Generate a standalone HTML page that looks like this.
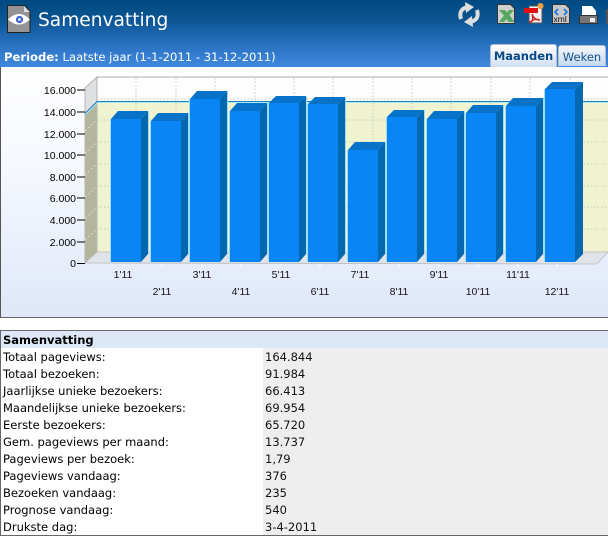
<!DOCTYPE html>
<html><head><meta charset="utf-8">
<style>
html,body{margin:0;padding:0;width:608px;height:536px;overflow:hidden;background:#fff}
body{font-family:"DejaVu Sans","Liberation Sans",sans-serif;font-size:11.5px;color:#000;position:relative}
#head{position:absolute;left:0;top:0;width:608px;height:67px;background:linear-gradient(#004a80 0,#0b5594 30%,#2b74c4 70%,#3f88de 100%)}
#title{position:absolute;left:38px;top:9px;font-size:18.6px;line-height:24px;color:#fff}
#per{position:absolute;left:4px;top:50px;font-size:11.6px;line-height:14px;color:#fff;white-space:nowrap}
.tab{position:absolute;top:44px;height:23px;box-sizing:border-box;border:1px solid #b0bccc;border-bottom:0;border-radius:3px 3px 0 0;text-align:center;line-height:23px;font-size:11.5px;color:#15548f}
#t1{left:490px;width:67px;font-weight:bold;color:#0a4a84;background:linear-gradient(#fff,#d0def2)}
#t2{left:558px;width:48px;height:22px;top:45px;background:linear-gradient(#f4f7fb,#c4d8ef);line-height:22px;border-bottom:1px solid #3f88de}
#ch{position:absolute;left:0;top:67px;width:608px;height:251px;box-sizing:border-box;border-left:1px solid #555;border-bottom:1px solid #666;background:linear-gradient(#fff 0,#f5f8fe 40%,#dfe7f8 100%)}
#tb{position:absolute;left:0;top:330px;width:608px;height:206px;box-sizing:border-box;border:1px solid #666;border-right:0;background:#fff}
.hd{height:17px;background:#dce8f8;font-weight:bold;line-height:19px;padding-left:2px;font-size:11.5px}
.r{height:17px;line-height:19px;white-space:nowrap;position:relative;padding-left:2px}
.r b{font-weight:normal;position:absolute;left:262px;right:0;top:0;height:17px;background:#eee;padding-left:2px;color:#111}
svg{position:absolute;left:0;top:0}
</style></head><body>
<div id="head"></div>
<div id="ch"></div>
<svg width="608" height="318" viewBox="0 0 608 318">
<!-- icons -->
<path d="M7.500 5.500h17l5.500 6v21H7.500z" fill="#949494" stroke="#222" stroke-width="1"/>
<path d="M24 6v6h6z" fill="#ddd"/>
<path d="M8 19.500q11-11 22 0q-11 10-22 0z" fill="#fff"/>
<circle cx="19.500" cy="19.500" r="3.600" fill="#3a62c8"/><circle cx="19.500" cy="19.500" r="1.500" fill="#dfe6ff"/>
<g fill="none" stroke="#dedede" stroke-width="4">
<path d="M461 19q-3-10 7-12"/><path d="M477 10q3 10-7 12"/></g>
<path d="M465 2l9 5-8 6zM473 27l-9-5 8-6z" fill="#dedede"/>
<path d="M497.500 4.500h13l4 4v15h-17z" fill="#d0d0cc" stroke="#333"/>
<path d="M499 10h6l2 2.500 2-2.500h5l-4.500 5 5 7h-6l-2-3-2.500 3h-5l5-6.500z" fill="#55a860"/>
<path d="M529 6h13v17h-13z" fill="#f3f3f3" stroke="#555"/>
<path d="M524 8h14v5h-14z" fill="#e01010"/>
<path d="M532 14q2 8 -2 8q5-4 10-2q-6 0-8-6z" fill="none" stroke="#d02020" stroke-width="1.400"/>
<circle cx="540.500" cy="6" r="3" fill="#f0a040"/>
<path d="M552.500 4.500h13l4 4v15h-17z" fill="#c8c8c8" stroke="#333"/>
<path d="M558 9l-3 3 3 3M564 9l3 3-3 3" fill="none" stroke="#1670f0" stroke-width="1.600"/>
<text x="553.500" y="22" font-family="Liberation Sans" font-size="8.500" fill="#111">xml</text>
<path d="M582 6h10l4 5v5h-14z" fill="#fff"/>
<path d="M579.500 15.500h18v8h-18z" fill="#777" stroke="#333"/>
<rect x="590" y="18" width="5" height="4" fill="#eee"/>
<rect x="606" y="9" width="2" height="15" fill="#555"/>

<!-- walls -->
<rect x="97" y="77" width="511" height="24" fill="#fdfdfe"/>
<rect x="97" y="101" width="511" height="151" fill="#eff3cf"/>
<path d="M97 77H608" stroke="#c8c8c8" stroke-width="1.500"/>
<polygon points="85,88 97,77 97,101 85,113" fill="#dfe0e2"/>
<polygon points="85,113 97,101 97,252 85,263" fill="#b3b69c"/>
<path d="M85 88V263M85 88L97 77V252" stroke="#b5b5b5" fill="none"/>
<polygon points="85,263 97,252 608,252 597,264" fill="#e0e3e8" stroke="#b8bcc0" stroke-width="0.800"/>
<g stroke="#c8c8c8" stroke-dasharray="1.500 2" fill="none">
<path d="M97 99H608M97 120H608M97 142H608M97 164H608M97 186H608M97 207H608M97 229H608"/>
<path d="M136 78V252M176 78V252M215 78V252M255 78V252M294 78V252M333 78V252M373 78V252M412 78V252M451 78V252M491 78V252M530 78V252M570 78V252"/>
</g>
<g stroke="#dcdcc8" stroke-dasharray="2 2" fill="none">
<path d="M85 131L97 120M85 153L97 142M85 175L97 164M85 197L97 186M85 218L97 207M85 240L97 229"/>
</g>
<path d="M85 113.500L97 101.500H608" stroke="#1d80c0" fill="none"/>
<path d="M86 114L98 102.500H608" stroke="#a8ecf4" fill="none"/>

<!-- bars -->
<g stroke="none">
<rect x="110" y="119" width="1" height="143" fill="#a0dcf0"/><rect x="148" y="111" width="1" height="143" fill="#a0dcf0"/>
<rect x="111" y="119" width="30" height="143" fill="#0a85f5"/><polygon points="141,119 148,111 148,254 141,262" fill="#0468b0"/><polygon points="111,119 118,111 148,111 141,119" fill="#0672c8"/>
<rect x="150" y="121" width="1" height="141" fill="#a0dcf0"/><rect x="188" y="113" width="1" height="141" fill="#a0dcf0"/>
<rect x="151" y="121" width="30" height="141" fill="#0a85f5"/><polygon points="181,121 188,113 188,254 181,262" fill="#0468b0"/><polygon points="151,121 158,113 188,113 181,121" fill="#0672c8"/>
<rect x="189" y="99" width="1" height="163" fill="#a0dcf0"/><rect x="227" y="91" width="1" height="163" fill="#a0dcf0"/>
<rect x="190" y="99" width="30" height="163" fill="#0a85f5"/><polygon points="220,99 227,91 227,254 220,262" fill="#0468b0"/><polygon points="190,99 197,91 227,91 220,99" fill="#0672c8"/>
<rect x="229" y="111" width="1" height="151" fill="#a0dcf0"/><rect x="267" y="103" width="1" height="151" fill="#a0dcf0"/>
<rect x="230" y="111" width="30" height="151" fill="#0a85f5"/><polygon points="260,111 267,103 267,254 260,262" fill="#0468b0"/><polygon points="230,111 237,103 267,103 260,111" fill="#0672c8"/>
<rect x="268" y="103" width="1" height="159" fill="#a0dcf0"/><rect x="306" y="96" width="1" height="158" fill="#a0dcf0"/>
<rect x="269" y="103" width="30" height="159" fill="#0a85f5"/><polygon points="299,103 306,96 306,254 299,262" fill="#0468b0"/><polygon points="269,103 276,96 306,96 299,103" fill="#0672c8"/>
<rect x="307" y="104" width="1" height="158" fill="#a0dcf0"/><rect x="345" y="97" width="1" height="157" fill="#a0dcf0"/>
<rect x="308" y="104" width="30" height="158" fill="#0a85f5"/><polygon points="338,104 345,97 345,254 338,262" fill="#0468b0"/><polygon points="308,104 315,97 345,97 338,104" fill="#0672c8"/>
<rect x="347" y="150" width="1" height="112" fill="#a0dcf0"/><rect x="385" y="142" width="1" height="112" fill="#a0dcf0"/>
<rect x="348" y="150" width="30" height="112" fill="#0a85f5"/><polygon points="378,150 385,142 385,254 378,262" fill="#0468b0"/><polygon points="348,150 355,142 385,142 378,150" fill="#0672c8"/>
<rect x="386" y="117" width="1" height="145" fill="#a0dcf0"/><rect x="424" y="110" width="1" height="144" fill="#a0dcf0"/>
<rect x="387" y="117" width="30" height="145" fill="#0a85f5"/><polygon points="417,117 424,110 424,254 417,262" fill="#0468b0"/><polygon points="387,117 394,110 424,110 417,117" fill="#0672c8"/>
<rect x="426" y="119" width="1" height="143" fill="#a0dcf0"/><rect x="464" y="111" width="1" height="143" fill="#a0dcf0"/>
<rect x="427" y="119" width="30" height="143" fill="#0a85f5"/><polygon points="457,119 464,111 464,254 457,262" fill="#0468b0"/><polygon points="427,119 434,111 464,111 457,119" fill="#0672c8"/>
<rect x="465" y="113" width="1" height="149" fill="#a0dcf0"/><rect x="503" y="105" width="1" height="149" fill="#a0dcf0"/>
<rect x="466" y="113" width="30" height="149" fill="#0a85f5"/><polygon points="496,113 503,105 503,254 496,262" fill="#0468b0"/><polygon points="466,113 473,105 503,105 496,113" fill="#0672c8"/>
<rect x="505" y="106" width="1" height="156" fill="#a0dcf0"/><rect x="543" y="98" width="1" height="156" fill="#a0dcf0"/>
<rect x="506" y="106" width="30" height="156" fill="#0a85f5"/><polygon points="536,106 543,98 543,254 536,262" fill="#0468b0"/><polygon points="506,106 513,98 543,98 536,106" fill="#0672c8"/>
<rect x="544" y="89" width="1" height="173" fill="#a0dcf0"/>
<rect x="545" y="89" width="30" height="173" fill="#0a85f5"/><polygon points="575,89 583,82 583,254 575,262" fill="#0468b0"/><polygon points="545,89 552,82 583,82 575,89" fill="#0672c8"/>
</g>

<!-- axis -->
<path d="M77 90h8M77 112h8M77 134h8M77 155h8M77 177h8M77 198h8M77 220h8M77 242h8M77 263.500h8" stroke="#000" stroke-width="1"/>
<path d="M123 264v3M162 264v3M202 264v3M241 264v3M281 264v3M320 264v3M360 264v3M399 264v3M439 264v3M478 264v3M518 264v3M557 264v3" stroke="#fff"/>
<g font-family="Liberation Sans" font-size="10.500" fill="#000" text-anchor="end">
<text x="76" y="94">16.000</text><text x="76" y="116">14.000</text><text x="76" y="138">12.000</text><text x="76" y="159">10.000</text><text x="76" y="181">8.000</text><text x="76" y="202">6.000</text><text x="76" y="224">4.000</text><text x="76" y="246">2.000</text><text x="76" y="267">0</text>
</g>
<g font-family="Liberation Sans" font-size="10.500" fill="#1a1020" text-anchor="middle">
<text x="123" y="278">1'11</text><text x="162" y="295">2'11</text><text x="202" y="278">3'11</text><text x="241" y="295">4'11</text><text x="281" y="278">5'11</text><text x="320" y="295">6'11</text><text x="360" y="278">7'11</text><text x="399" y="295">8'11</text><text x="439" y="278">9'11</text><text x="478" y="295">10'11</text><text x="518" y="278">11'11</text><text x="557" y="295">12'11</text>
</g>
</svg>
<div id="title">Samenvatting</div>
<div id="per"><strong>Periode:</strong> Laatste jaar (1-1-2011 - 31-12-2011)</div>
<div class="tab" id="t1">Maanden</div>
<div class="tab" id="t2">Weken</div>
<div id="tb">
<div class="hd">Samenvatting</div>
<div class="r">Totaal pageviews:<b>164.844</b></div>
<div class="r">Totaal bezoeken:<b>91.984</b></div>
<div class="r">Jaarlijkse unieke bezoekers:<b>66.413</b></div>
<div class="r">Maandelijkse unieke bezoekers:<b>69.954</b></div>
<div class="r">Eerste bezoekers:<b>65.720</b></div>
<div class="r">Gem. pageviews per maand:<b>13.737</b></div>
<div class="r">Pageviews per bezoek:<b>1,79</b></div>
<div class="r">Pageviews vandaag:<b>376</b></div>
<div class="r">Bezoeken vandaag:<b>235</b></div>
<div class="r">Prognose vandaag:<b>540</b></div>
<div class="r">Drukste dag:<b>3-4-2011</b></div>
</div>
</body></html>
